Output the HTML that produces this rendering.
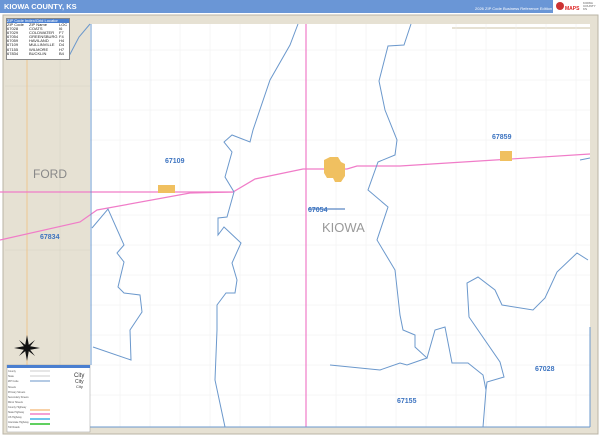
<!DOCTYPE html>
<html><head><meta charset="utf-8"><style>
body{margin:0;width:600px;height:436px;overflow:hidden;background:#fff;font-family:"Liberation Sans",sans-serif;position:relative}
.hdr{position:absolute;left:0;top:0;width:600px;height:13px;background:#6a96d6}
.t{position:absolute;white-space:nowrap}
</style></head><body>
<div class="hdr"></div>
<div class="t" style="left:4px;top:2px;font-size:7.5px;font-weight:bold;color:#fff">KIOWA COUNTY, KS</div>
<div class="t" style="left:475px;top:6px;font-size:4px;color:#fff">2026 ZIP Code Business Reference Edition</div>
<div style="position:absolute;left:553px;top:0;width:47px;height:14px;background:#fff"></div>
<div style="position:absolute;left:556px;top:2px;width:8px;height:8px;border-radius:50%;background:#c33"></div>
<div class="t" style="left:565px;top:6px;font-size:5px;font-weight:bold;color:#d22">MAPS</div>
<div class="t" style="left:583px;top:2px;font-size:3px;line-height:3px;color:#555">KIOWA<br>COUNTY<br>KS</div>
<svg style="position:absolute;left:0;top:13px" width="600" height="423" viewBox="0 13 600 423">
<rect x="0" y="13" width="600" height="423" fill="#fff"/>
<rect x="3" y="15" width="595" height="419" fill="#e6e1d3" stroke="#b9b4a6"/>
<rect x="90" y="24" width="500" height="403" fill="#fff"/>
<rect x="452" y="27" width="138" height="2" fill="#e6e1d3"/>
<g stroke="#eeeeee" stroke-width="0.5">
<path d="M120 24V427M150 24V427M180 24V427M210 24V427M240 24V427M270 24V427M336 24V427M366 24V427M396 24V427M426 24V427M456 24V427M486 24V427M516 24V427M546 24V427M576 24V427"/>
<path d="M90 50H590M90 80H590M90 110H590M90 140H590M90 215H590M90 245H590M90 275H590M90 305H590M90 335H590M90 365H590M90 395H590"/>
</g>
<g stroke="#d6d2c4" stroke-width="0.5"><path d="M5 86H90M5 250H90M60 24V365"/></g>
<g fill="none" stroke="#f2c080" stroke-width="0.8"><path d="M27 60V365"/></g>
<g fill="none" stroke="#f07cc8" stroke-width="1.2">
<path d="M306 24V427"/>
<path d="M0 240L80 222L97 210L190 193L233 192L255 179L303 169L347 169L357 166L400 166L590 154"/>
<path d="M0 192H233"/>
</g>
<g fill="#f0c060"><rect x="158" y="185" width="17" height="8"/><path d="M324 160l6-3 8 0 3 5 4 2 0 12-4 6-6 0-2-4-6 0-3-5z"/><rect x="500" y="151" width="12" height="10"/></g>
<g fill="none" stroke="#6b98cc" stroke-width="1">
<path d="M68 58L79 37L90 24"/>
<path d="M298 24L290 45L270 80L253 130L250 142L232 135L224 142L232 152L225 177L234 192L227 217L218 218L218 235L224 227L241 243L232 263L237 280L235 293L226 293L217 305L217 330L215 380L225 427"/>
<path d="M92 228L108 209L124 245L117 253L124 262L118 287L124 293L140 295L142 312L130 330L131 360L93 347"/>
<path d="M411 24L404 45L388 46L379 81L385 110L397 140L395 155L378 162L368 190L388 207L377 240L395 270L400 315L403 330L415 335L415 347L427 358L407 365L400 363L380 370L330 365"/>
<path d="M427 358L435 330L445 327L452 363L468 363L483 375L486 390L483 427"/>
<path d="M588 260L577 253L557 272L545 298L533 310L502 305L495 290L478 277L467 283L469 317L500 362L504 377L487 382L486 390"/>
<path d="M590 327V427M90 427H590M91 24V365"/>
<path d="M580 160L590 158"/>
</g>
<path d="M308 209H345" stroke="#5a86c4" stroke-width="1.2"/>
<g font-family="Liberation Sans" font-weight="bold" font-size="7" fill="#3d74c0">
<text x="165" y="163">67109</text><text x="492" y="139">67859</text><text x="308" y="212">67054</text>
<text x="40" y="239">67834</text><text x="397" y="403">67155</text><text x="535" y="371">67028</text>
</g>
<text x="322" y="232" font-size="13" fill="#999" font-family="Liberation Sans">KIOWA</text>
<text x="33" y="178" font-size="12" fill="#888" font-family="Liberation Sans">FORD</text>
<g transform="translate(27,348)" fill="#111">
<path d="M0-13L2-2 0 0-2-2zM0 13L2 2 0 0-2 2zM-13 0L-2 2 0 0-2-2zM13 0L2 2 0 0 2-2z"/>
<path d="M-8-8L1-1-1 1zM8 8L-1 1 1-1zM8-8L1 1-1-1zM-8 8L-1-1 1 1z"/>
</g>
<rect x="7" y="365" width="83" height="67" fill="#fff" stroke="#999" stroke-width="0.5"/>
<rect x="7" y="365" width="83" height="3" fill="#4a7fd0"/>
<g stroke="#ccc" stroke-width="1"><path d="M30 371H50M30 376H50"/></g>
<path d="M30 381H50" stroke="#9cb9dc" stroke-width="1.5"/>
<path d="M30 410H50" stroke="#f5c28a" stroke-width="1.5"/>
<path d="M30 414H50" stroke="#f080c8" stroke-width="1.5"/>
<path d="M30 419H50" stroke="#40b0e8" stroke-width="1.5"/>
<path d="M30 424H50" stroke="#60d060" stroke-width="2"/>
<g font-size="2.5" fill="#555"><text x="8" y="372">County</text><text x="8" y="377">State</text><text x="8" y="382">ZIP Code</text><text x="8" y="388">Streets</text><text x="8" y="393">Primary Streets</text><text x="8" y="398">Secondary Streets</text><text x="8" y="403">Minor Streets</text><text x="8" y="408">County Highway</text><text x="8" y="413">State Highway</text><text x="8" y="418">US Highway</text><text x="8" y="423">Interstate Highway</text><text x="8" y="428">Toll Roads</text></g>
<g font-size="6" fill="#333"><text x="74" y="377">City</text><text x="75" y="383" font-size="5">City</text><text x="76" y="388" font-size="4">City</text></g>
</svg>
<div style="position:absolute;left:6px;top:18px;width:62px;height:40px;background:#fff;border:1px solid #888;font-size:4px;line-height:4.1px;color:#222">
<div style="background:#4a7fd0;color:#fff;height:4px">ZIP Code Index/Grid Locator</div>
<div style="display:flex"><div style="width:22px">ZIP Code<br>67028<br>67029<br>67054<br>67059<br>67109<br>67155<br>67834</div><div style="width:30px">ZIP Name<br>COATS<br>COLDWATER<br>GREENSBURG<br>HAVILAND<br>MULLINVILLE<br>WILMORE<br>BUCKLIN</div><div>LOC<br>I6<br>F7<br>F4<br>H4<br>D4<br>H7<br>B4</div></div>
</div>
</body></html>
